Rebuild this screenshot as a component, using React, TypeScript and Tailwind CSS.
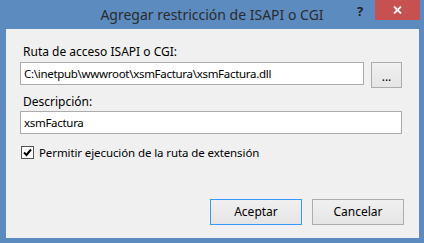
import React from 'react';

const FONT = { fontFamily: '"Noto Sans", "Open Sans", sans-serif' };

const Field: React.FC<{ value: string; className?: string }> = ({ value, className = '' }) => (
  <div
    className={`h-[23px] bg-white border border-[#acacac] flex items-center pl-[3px] text-[11.5px] tracking-[-0.3px] text-black ${className}`}
  >
    {value}
  </div>
);

const Button: React.FC<{ label: string; primary?: boolean }> = ({ label, primary }) => (
  <button
    className={`w-[92px] h-[26px] text-[12px] text-black bg-gradient-to-b from-[#f0f0f0] to-[#e5e5e5] border ${
      primary ? 'border-[#3399ff]' : 'border-[#acacac]'
    }`}
  >
    {label}
  </button>
);

export default function App() {
  return (
    <div className="w-[424px] h-[243px] bg-[#5c8bc0] flex flex-col" style={FONT}>
      {/* Title bar */}
      <div className="relative h-[29px] shrink-0 flex items-center justify-center">
        <span className="text-[14px] text-[#2b2b2b] mt-[-1px]">Agregar restricción de ISAPI o CGI</span>
        <span className="absolute left-[357px] top-[2px] text-[13px] font-bold text-[#222]">?</span>
        <div className="absolute left-[375px] top-0 w-[45px] h-[20px] bg-[#c75050] flex items-center justify-center">
          <svg width="9" height="8" viewBox="0 0 9 8">
            <path d="M1 0.5 L8 7.5 M8 0.5 L1 7.5" stroke="#fff" strokeWidth="1.8" />
          </svg>
        </div>
      </div>

      {/* Client area */}
      <div className="ml-[6px] mr-[5px] mb-[5px] flex-1 bg-[#f0f0f0] flex flex-col pl-[14px] pr-[17px] text-[12px] text-black">
        <div className="mt-[14px] h-[18px] pl-[3px]">Ruta de acceso ISAPI o CGI:</div>
        <div className="flex gap-[7px] mt-[1px]">
          <Field value="C:\inetpub\wwwroot\xsmFactura\xsmFactura.dll" className="w-[344px]" />
          <button className="w-[31px] h-[26px] border border-[#acacac] bg-gradient-to-b from-[#f0f0f0] to-[#e5e5e5] text-[12px] text-black leading-none pt-[4px]">
            ...
          </button>
        </div>
        <div className="mt-[5px] h-[18px] pl-[3px]">Descripción:</div>
        <Field value="xsmFactura" className="w-[382px]" />
        <div className="flex items-center mt-[10px] pl-[1px]">
          <div className="w-[13px] h-[13px] bg-white border border-[#555] flex items-center justify-center">
            <svg width="9" height="9" viewBox="0 0 9 9">
              <path d="M1 4.5 L3.5 7 L8 1.5" stroke="#000" strokeWidth="2" fill="none" />
            </svg>
          </div>
          <span className="ml-[5px] text-[11.5px] tracking-[-0.1px]">Permitir ejecución de la ruta de extensión</span>
        </div>
        <div className="flex justify-end gap-[10px] mt-auto mb-[13px] mr-[-2px]">
          <Button label="Aceptar" primary />
          <Button label="Cancelar" />
        </div>
      </div>
    </div>
  );
}
